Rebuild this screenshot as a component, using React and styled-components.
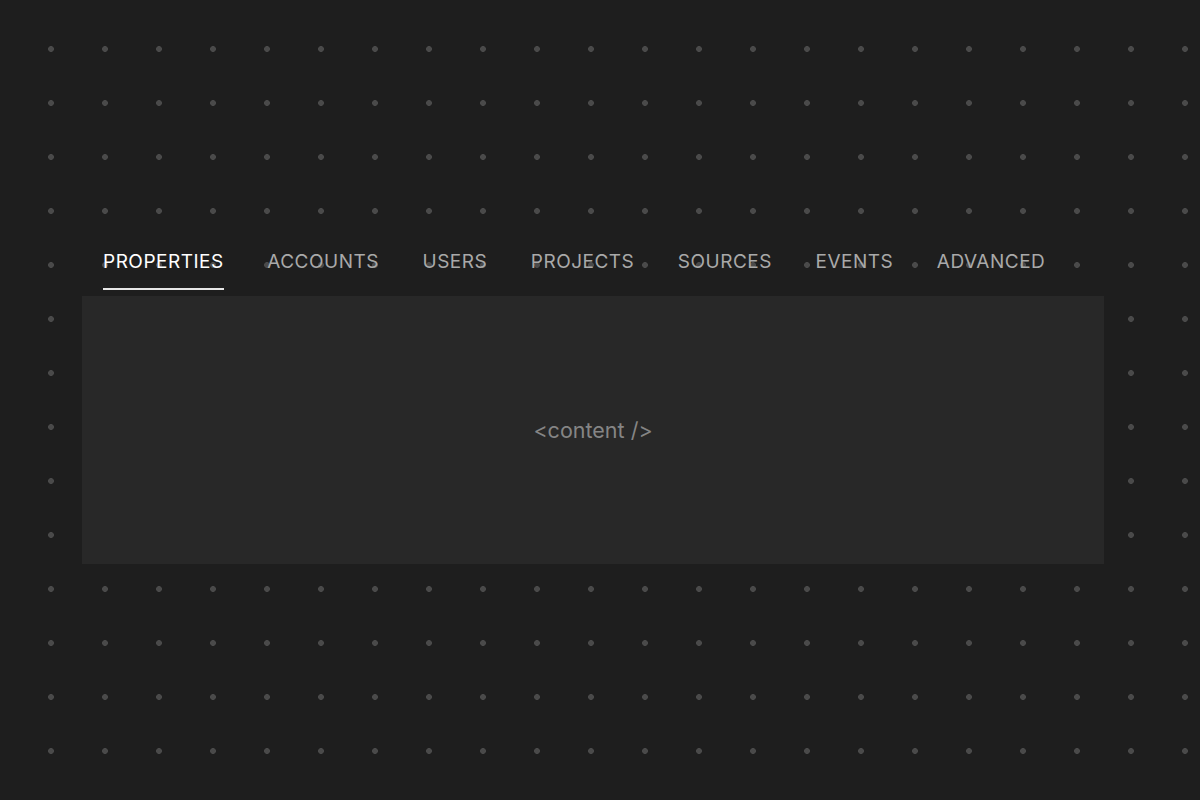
import React, { useState } from "react";
import styled, { createGlobalStyle } from "styled-components";

const tabs = ["Properties", "Accounts", "Users", "Projects", "Sources", "Events", "Advanced"];

const App = () => {
  const [active, setActive] = useState(0);
  return (
    <>
      <GlobalStyle />
      <Page>
        <Wrapper>
          <TabList>
            {tabs.map((t, i) => (
              <Tab key={t} $active={i === active} onClick={() => setActive(i)}>
                {t}
              </Tab>
            ))}
          </TabList>
          <Panel>
            <Placeholder>&lt;content /&gt;</Placeholder>
          </Panel>
        </Wrapper>
      </Page>
    </>
  );
};

export default App;

const GlobalStyle = createGlobalStyle`
  html, body {
    margin: 0;
    padding: 0;
    background: #1e1e1e;
  }
  * {
    box-sizing: border-box;
  }
`;

const Page = styled.div`
  width: 100%;
  min-height: 800px;
  padding-top: 237px;
  background-color: #1e1e1e;
  background-image: radial-gradient(circle, #4a4a4a 0 2.6px, transparent 3.2px);
  background-size: 54px 54px;
  background-position: 24px 22px;
  font-family: Inter, "Noto Sans", "Liberation Sans", sans-serif;
`;

const Wrapper = styled.div`
  margin-left: 82px;
  width: 1022px;
`;

const TabList = styled.div`
  display: flex;
  gap: 43.6px;
  padding-left: 21px;
  margin-bottom: 6px;
`;

const Tab = styled.button`
  background: none;
  border: none;
  border-bottom: 2px solid ${(p) => (p.$active ? "#e6e6e6" : "transparent")};
  padding: 13px 0 14px;
  font-family: inherit;
  font-size: 19px;
  line-height: 24px;
  letter-spacing: 0.5px;
  text-transform: uppercase;
  color: ${(p) => (p.$active ? "#ffffff" : "#a9a9a9")};
  cursor: pointer;
`;

const Panel = styled.div`
  height: 268px;
  background: #282828;
  display: flex;
  align-items: center;
  justify-content: center;
`;

const Placeholder = styled.span`
  font-size: 21.5px;
  color: #858585;
`;
